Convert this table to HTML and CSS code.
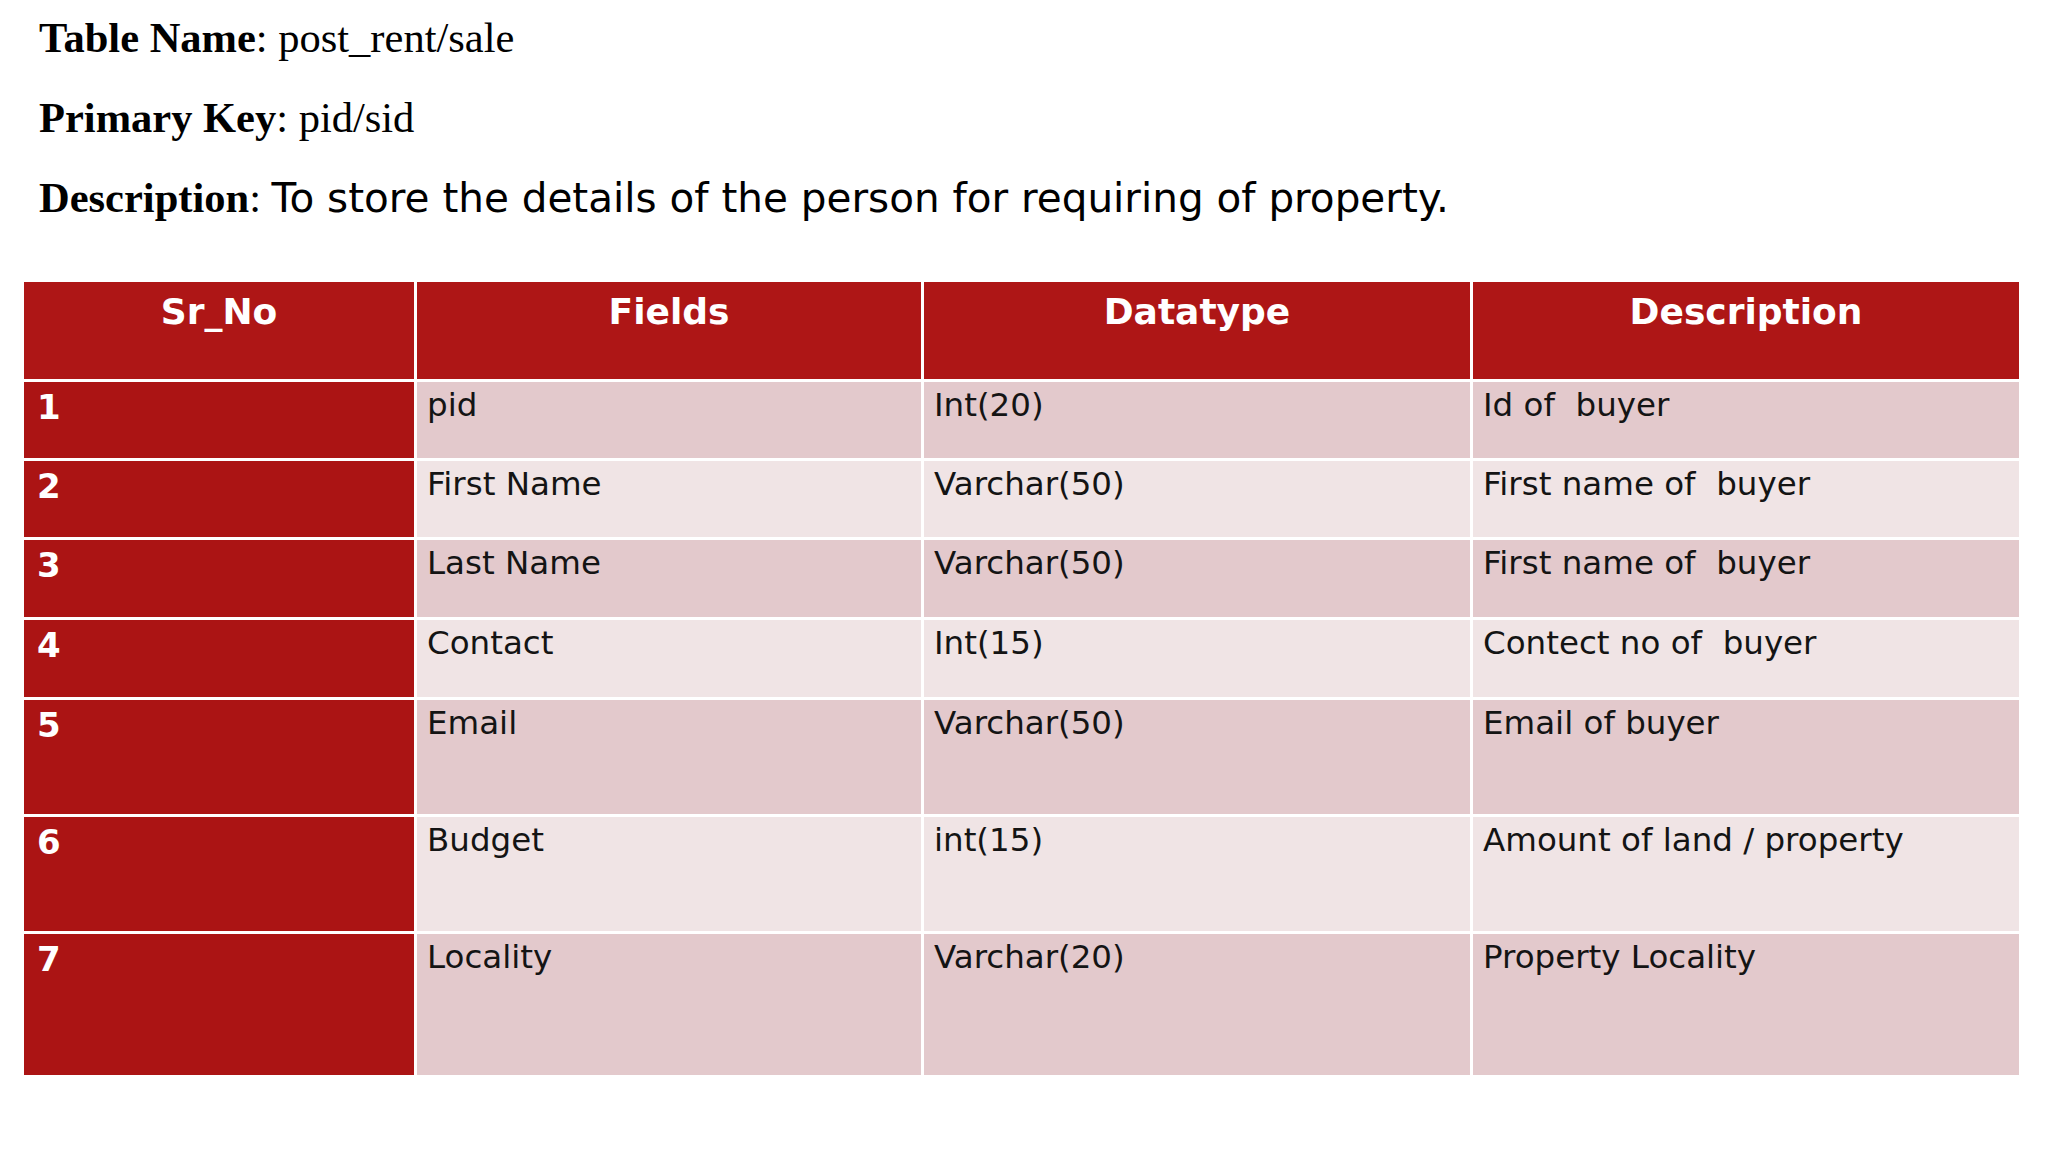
FILE: index.html
```html
<!DOCTYPE html>
<html lang="en">
<head>
<meta charset="utf-8">
<title>post_rent/sale</title>
<link rel="stylesheet" href="styles.css">
</head>
<body>
<div class="page">
  <div class="meta">
    <p class="line"><b>Table Name</b>: post_rent/sale</p>
    <p class="line"><b>Primary Key</b>: pid/sid</p>
    <p class="line"><b>Description</b>: <span class="sans">To store the details of the person for requiring of property.</span></p>
  </div>
  <div class="grid">
    <div class="head">Sr_No</div>
    <div class="head">Fields</div>
    <div class="head">Datatype</div>
    <div class="head">Description</div>

    <div class="num">1</div>
    <div class="cell odd">pid</div>
    <div class="cell odd">Int(20)</div>
    <div class="cell odd">Id of &nbsp;buyer</div>

    <div class="num">2</div>
    <div class="cell even">First Name</div>
    <div class="cell even">Varchar(50)</div>
    <div class="cell even">First name of &nbsp;buyer</div>

    <div class="num">3</div>
    <div class="cell odd">Last Name</div>
    <div class="cell odd">Varchar(50)</div>
    <div class="cell odd">First name of &nbsp;buyer</div>

    <div class="num">4</div>
    <div class="cell even">Contact</div>
    <div class="cell even">Int(15)</div>
    <div class="cell even">Contect no of &nbsp;buyer</div>

    <div class="num">5</div>
    <div class="cell odd">Email</div>
    <div class="cell odd">Varchar(50)</div>
    <div class="cell odd">Email of buyer</div>

    <div class="num">6</div>
    <div class="cell even">Budget</div>
    <div class="cell even">int(15)</div>
    <div class="cell even">Amount of land / property</div>

    <div class="num">7</div>
    <div class="cell odd">Locality</div>
    <div class="cell odd">Varchar(20)</div>
    <div class="cell odd">Property Locality</div>
  </div>
</div>
</body>
</html>
```
FILE: styles.css
```css
html, body {
  margin: 0;
  padding: 0;
  background: #ffffff;
}
.page {
  width: 2048px;
  height: 1152px;
  overflow: hidden;
  color: #000;
}
.meta {
  margin: -2px 0 0 0;
  padding-left: 39px;
  font-family: "Liberation Serif", "Times New Roman", serif;
  font-size: 42.5px;
  line-height: 80px;
}
.line {
  margin: 0;
  white-space: nowrap;
}
.line b {
  font-weight: 700;
}
.sans {
  font-family: "DejaVu Sans", sans-serif;
  font-size: 40.5px;
}
.grid {
  margin: 44px 0 0 24px;
  width: 1995px;
  display: grid;
  grid-template-columns: 390px 504px 546px 546px;
  grid-template-rows: 97px 76px 76px 77px 77px 114px 114px 141px;
  gap: 3px;
  font-family: "DejaVu Sans", sans-serif;
}
.head {
  background: #ae1616;
  color: #ffffff;
  font-weight: 700;
  font-size: 36px;
  line-height: 1.2;
  text-align: center;
  padding-top: 8px;
}
.num {
  background: #ab1414;
  color: #ffffff;
  font-weight: 700;
  font-size: 34px;
  line-height: 1.2;
  padding: 5px 0 0 13px;
}
.cell {
  font-size: 32.5px;
  line-height: 1.2;
  padding: 4px 0 0 10px;
  color: #141414;
  white-space: nowrap;
}
.odd {
  background: #e3c9cc;
}
.even {
  background: #f0e4e5;
}
```
